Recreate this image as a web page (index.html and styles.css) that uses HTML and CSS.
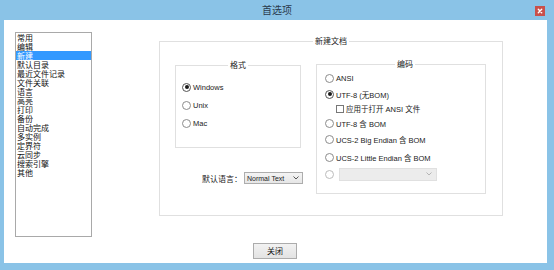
FILE: index.html
```html
<!DOCTYPE html>
<html lang="zh">
<head>
<meta charset="utf-8">
<title>首选项</title>
<link rel="stylesheet" href="styles.css">
</head>
<body>
<div class="window">
  <div class="titlebar">
    <span></span>
    <span class="title">首选项</span>
    <span class="close-btn"><svg width="10" height="10" viewBox="0 0 10 10"><path d="M3.3 3.3 L6.7 6.7 M6.7 3.3 L3.3 6.7" stroke="#fff" stroke-width="1.4" stroke-linecap="round"/></svg></span>
  </div>
  <div class="client">
    <div class="top">
      <ul class="list">
        <li>常用</li>
        <li>编辑</li>
        <li class="selected">新建</li>
        <li>默认目录</li>
        <li>最近文件记录</li>
        <li>文件关联</li>
        <li>语言</li>
        <li>高亮</li>
        <li>打印</li>
        <li>备份</li>
        <li>自动完成</li>
        <li>多实例</li>
        <li>定界符</li>
        <li>云同步</li>
        <li>搜索引擎</li>
        <li>其他</li>
      </ul>
      <div class="group main-group">
        <div class="group-title">新建文档</div>
        <div class="inner">
          <div class="left-col">
            <div class="group format-group">
              <div class="group-title">格式</div>
              <div class="radios">
                <div class="row r18"><span class="radio checked"></span><span>Windows</span></div>
                <div class="row r18"><span class="radio"></span><span>Unix</span></div>
                <div class="row r18"><span class="radio"></span><span>Mac</span></div>
              </div>
            </div>
            <div class="lang-row">
              <span class="lang-label">默认语言：</span>
              <span class="select"><span class="select-text">Normal Text</span><svg width="6" height="4" viewBox="0 0 6 4"><path d="M0.5 0.5 L3 3 L5.5 0.5" fill="none" stroke="#555" stroke-width="1"/></svg></span>
            </div>
          </div>
          <div class="group enc-group">
            <div class="group-title">编码</div>
            <div class="row h16"><span class="radio"></span><span>ANSI</span></div>
            <div class="row h16"><span class="radio checked"></span><span>UTF-8 (无BOM)</span></div>
            <div class="row h13 indent"><span class="check"></span><span>应用于打开 ANSI 文件</span></div>
            <div class="row h16"><span class="radio"></span><span>UTF-8 含 BOM</span></div>
            <div class="row h17"><span class="radio"></span><span>UCS-2 Big Endian 含 BOM</span></div>
            <div class="row h18"><span class="radio"></span><span>UCS-2 Little Endian 含 BOM</span></div>
            <div class="row h16"><span class="radio disabled"></span><span class="combo"><svg width="6" height="4" viewBox="0 0 6 4"><path d="M0.5 0.5 L3 3 L5.5 0.5" fill="none" stroke="#b5b5b5" stroke-width="1"/></svg></span></div>
          </div>
        </div>
      </div>
    </div>
    <div class="footer">
      <button class="btn">关闭</button>
    </div>
  </div>
</div>
</body>
</html>
```

FILE: styles.css
```css
* { box-sizing: border-box; }
html, body { margin: 0; padding: 0; }
body {
  width: 554px;
  height: 270px;
  overflow: hidden;
  background: #8ac3e7;
  font-family: "Liberation Sans", "Noto Sans CJK SC", sans-serif;
  font-size: 7.5px;
  color: #1a1a1a;
}
.window {
  height: 270px;
  display: flex;
  flex-direction: column;
}
.titlebar {
  height: 20px;
  display: grid;
  grid-template-columns: 1fr auto 1fr;
  align-items: center;
}
.title {
  font-family: "Noto Sans CJK SC", sans-serif;
  font-size: 10px;
  line-height: 20px;
  color: #2a3a4c;
}
.close-btn {
  justify-self: end;
  align-self: start;
  margin-top: 6px;
  margin-right: 9px;
  width: 10px;
  height: 10px;
  background: #c9504b;
  display: flex;
}
.client {
  flex: 1;
  margin: 0 7px 7px 4px;
  background: #ffffff;
  display: flex;
  flex-direction: column;
}
.top {
  display: flex;
  align-items: flex-start;
  height: 217px;
}
.list {
  list-style: none;
  margin: 12px 0 0 11px;
  padding: 0;
  width: 77px;
  height: 205px;
  border: 1px solid #a9a9a9;
  font-family: "Noto Sans CJK SC", sans-serif;
  font-size: 8px;
  line-height: 9px;
  color: #111;
}
.list li {
  height: 9px;
  padding-left: 1px;
  white-space: nowrap;
}
.list li.selected {
  background: #3399ff;
  color: #fff;
}
.group {
  border: 1px solid #e0e0e0;
}
.group-title {
  display: table;
  margin: -7px auto 0;
  padding: 0 2px;
  background: #fff;
  line-height: 12px;
  font-family: "Noto Sans CJK SC", sans-serif;
  font-size: 8px;
  color: #222;
}
.main-group {
  margin: 21px 0 0 67px;
  width: 344px;
  height: 175px;
}
.inner {
  display: flex;
  align-items: flex-start;
  margin-top: 17px;
  padding-left: 15px;
  gap: 15px;
}
.left-col {
  width: 126px;
  margin-top: 1px;
}
.format-group {
  width: 126px;
  height: 83px;
}
.radios {
  padding-top: 7px;
  padding-left: 6px;
}
.row {
  display: flex;
  align-items: center;
  white-space: nowrap;
}
.r18 { height: 18px; }
.h13 { height: 13px; }
.h16 { height: 16px; }
.h17 { height: 17px; }
.h18 { height: 18px; }
.radio {
  width: 9px;
  height: 9px;
  border-radius: 50%;
  border: 1px solid #8c8c8c;
  background: #fff;
  margin-right: 2px;
  display: flex;
  align-items: center;
  justify-content: center;
  flex: none;
}
.radio.checked {
  border-color: #555;
}
.radio.checked::after {
  content: "";
  width: 4px;
  height: 4px;
  border-radius: 50%;
  background: #1a1a1a;
}
.radio.disabled {
  border-color: #bcbcbc;
}
.check {
  width: 8px;
  height: 8px;
  border: 1px solid #777;
  background: #fff;
  margin-right: 2px;
  flex: none;
}
.lang-row {
  display: flex;
  justify-content: flex-end;
  align-items: center;
  margin-top: 24px;
  margin-right: -2px;
  height: 12px;
}
.lang-label {
  font-family: "Noto Sans CJK SC", sans-serif;
  font-size: 8px;
  margin-right: 2px;
}
.select {
  width: 59px;
  height: 12px;
  border: 1px solid #adadad;
  background: linear-gradient(#f4f4f4, #e6e6e6);
  display: flex;
  align-items: center;
  justify-content: space-between;
  padding: 0 3px 0 2px;
}
.select-text {
  font-size: 7px;
  color: #222;
  white-space: nowrap;
}
.enc-group {
  width: 170px;
  height: 130px;
  padding-left: 8px;
}
.indent {
  padding-left: 11px;
}
.combo {
  margin-left: 3px;
  width: 98px;
  height: 13px;
  background: #ececec;
  border: 1px solid #e0e0e0;
  display: flex;
  align-items: center;
  justify-content: flex-end;
  padding-right: 4px;
}
.footer {
  display: flex;
  justify-content: center;
  margin-top: 6px;
  padding-right: 1px;
}
.btn {
  width: 44px;
  height: 16px;
  padding: 0;
  border: 1px solid #acacac;
  background: linear-gradient(#f2f2f2, #e3e3e3);
  font-family: "Noto Sans CJK SC", sans-serif;
  font-size: 8px;
  color: #111;
  line-height: 14px;
}
```
